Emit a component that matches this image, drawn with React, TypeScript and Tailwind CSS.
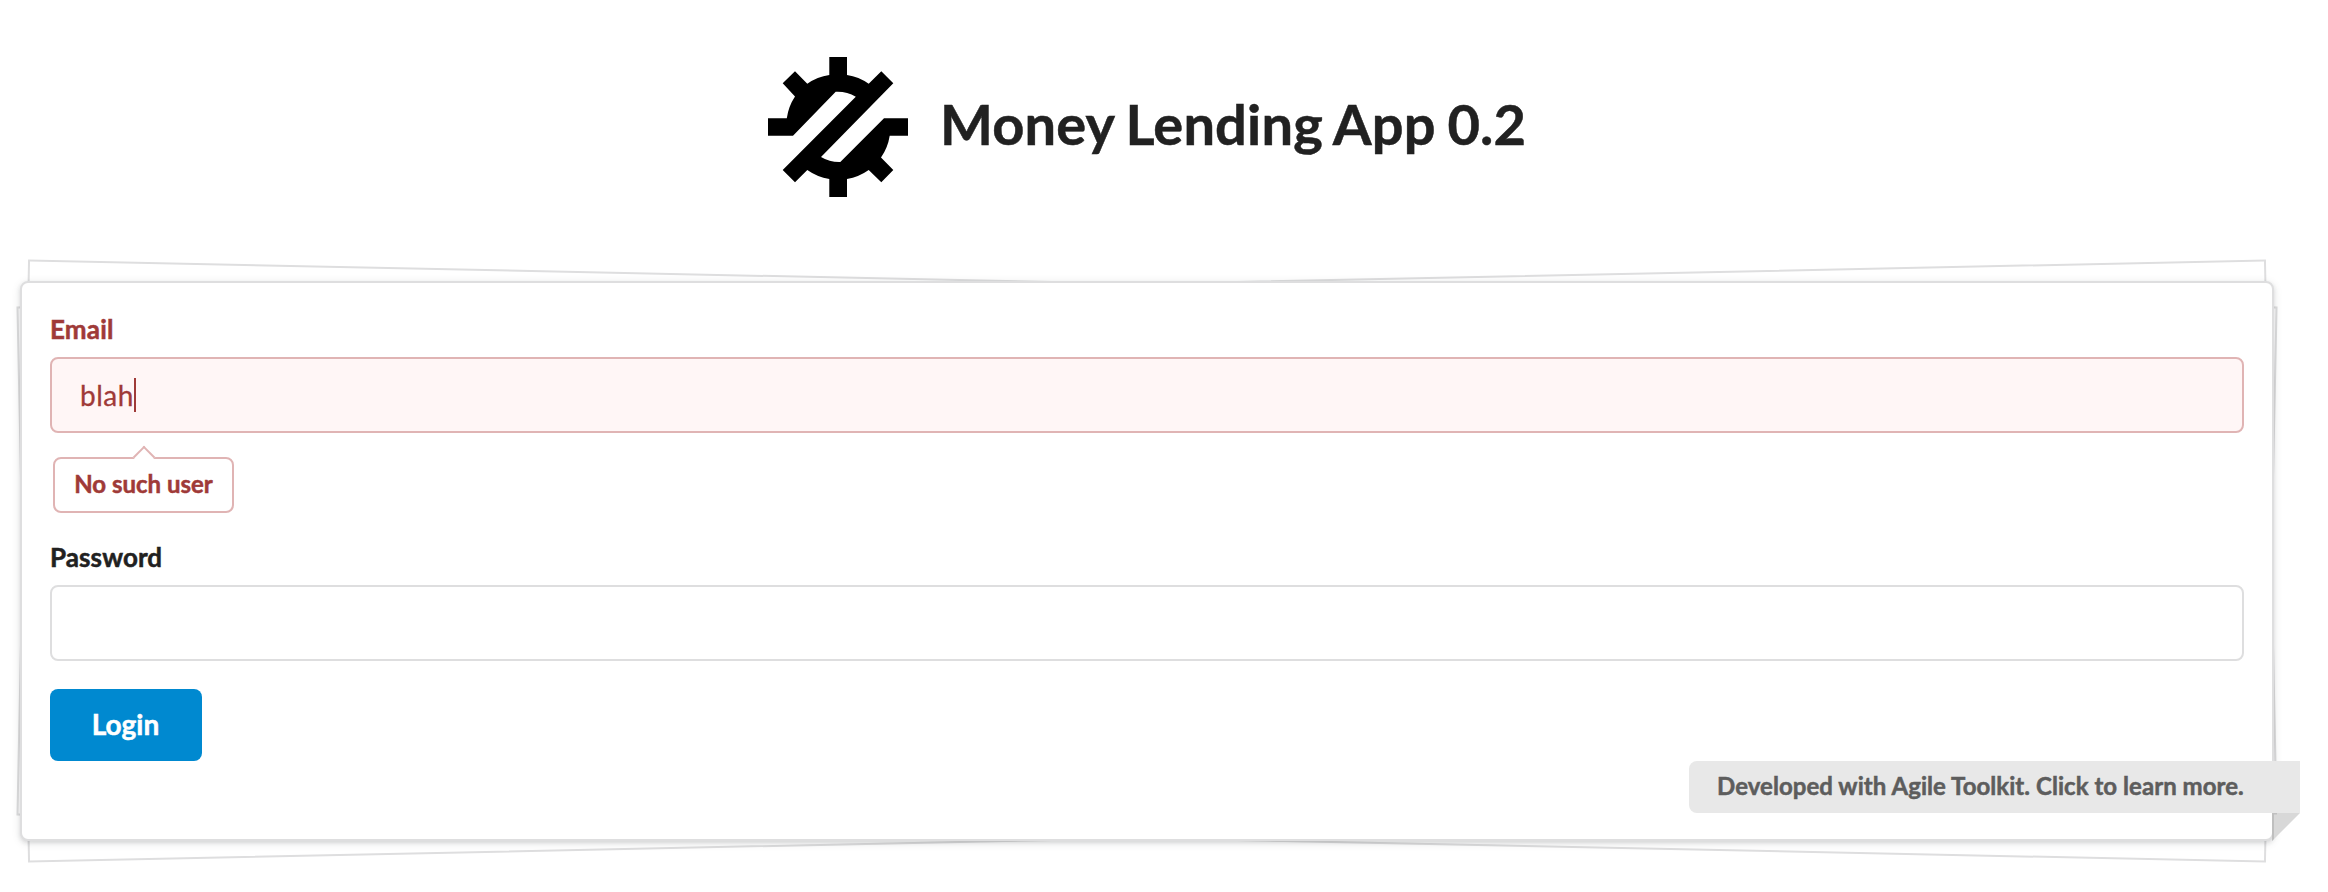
export default function App() {
  return (
    <main className="h-[892px] w-[2328px] overflow-hidden bg-white font-['Lato',sans-serif] text-[28px] text-[#212121]">
      <header className="flex h-[281px] items-start pt-[57px] pl-[768px]">
        <svg viewBox="0 0 140 140" className="size-[140px] shrink-0" aria-hidden="true">
          <path d="M0 61.3H18.8A52 52 0 0 1 27 39.5L14.7 26.3 27 14.3 39.3 26.7A52 52 0 0 1 61.3 18V0H79V18A52 52 0 0 1 100.7 26.7L113.3 14.3 125.3 26.3 53 100A35.3 35.3 0 0 0 72.3 105L116 61.3H140V78.7H121.7A52 52 0 0 1 113 100.5L125.3 113 113.3 125.3 100.7 113A52 52 0 0 1 79 122V140H61.3V122A52 52 0 0 1 39.3 113L27 125.3 14.7 113 87.8 39.7A35.3 35.3 0 0 0 67.7 34.7L25 78.7H0Z" />
        </svg>
        <h1 className="mt-[31px] ml-[32px] text-[56px] leading-[72px] font-bold tracking-[0.15px] whitespace-nowrap [-webkit-text-stroke:0.5px] [word-spacing:-2px]">Money Lending App 0.2</h1>
      </header>

      <section className="relative isolate ml-5 h-[560px] w-[2254px]">
        <div className="absolute inset-[2px] -z-10 rotate-[1.2deg] border-2 border-[#dededf] bg-white" />
        <div className="absolute inset-[2px] -z-10 -rotate-[1.2deg] border-2 border-[#dededf] bg-white" />
        <form className="flex h-full flex-col items-start rounded-lg border-2 border-[#dededf] bg-white px-7 pt-[27px] shadow-[0_2px_4px_0_rgba(34,36,38,0.12),0_2px_10px_0_rgba(34,36,38,0.1)]">
          <label className="h-[47px] text-[26px] leading-[38px] font-bold tracking-[0.2px] text-[#9f3a38] [-webkit-text-stroke:0.5px]">Email</label>
          <div className="flex h-[76px] w-full items-center rounded-lg border-2 border-[#e0b4b4] bg-[#fff6f6] pl-7 text-[#9f3a38]">
            <span className="tracking-[0.5px] [-webkit-text-stroke:0.3px]">blah</span>
            <span className="h-[34px] w-[2px] bg-[#9f3a38]" />
          </div>
          <div className="relative mt-6 ml-[3px] flex h-14 w-[181px] items-center justify-center rounded-lg border-2 border-[#e0b4b4] bg-white pb-[2px] text-[24px] font-bold whitespace-nowrap text-[#9f3a38] [-webkit-text-stroke:0.5px]">
            No such user
            <span className="absolute -top-[10px] left-[81px] size-4 rotate-45 border-t-2 border-l-2 border-[#e0b4b4] bg-white" />
          </div>
          <label className="mt-[25px] h-[47px] text-[26px] leading-[38px] font-bold tracking-[0.1px] [-webkit-text-stroke:0.5px]">Password</label>
          <div className="h-[76px] w-full rounded-lg border-2 border-[#dededf] bg-white" />
          <button type="button" className="mt-7 h-[72px] w-[152px] rounded-lg bg-[#0089d0] pr-[1px] pb-[2px] text-[28px] font-bold text-white [-webkit-text-stroke:0.5px]">Login</button>
        </form>
        <div className="absolute top-[480px] left-[1669px] flex h-[52px] w-[611px] items-center rounded-l-lg bg-[#e8e8e8] pb-[2px] pl-[28px] text-[24px] font-bold tracking-[0.05px] whitespace-nowrap text-[#5d5d5d] [-webkit-text-stroke:0.5px]">
          Developed with Agile Toolkit. Click to learn more.
        </div>
        <svg viewBox="0 0 28 28" className="absolute top-[532px] left-[2252px] size-7" aria-hidden="true">
          <path d="M0 0H28L0 28Z" fill="#d8d8d8" />
          <path d="M0 0H5V1.5H2V26L0 28Z" fill="#bfbfbf" />
        </svg>
      </section>
    </main>
  );
}
